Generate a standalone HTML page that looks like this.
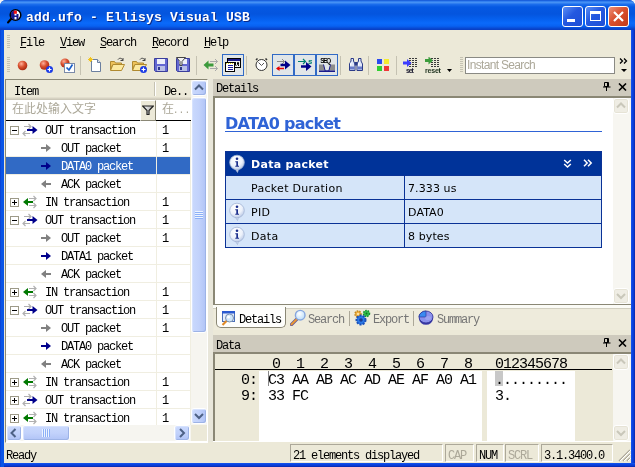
<!DOCTYPE html>
<html><head><meta charset="utf-8"><title>add.ufo - Ellisys Visual USB</title>
<style>
*{box-sizing:border-box;margin:0;padding:0}
html,body{width:635px;height:467px;overflow:hidden;background:#f4f4f4}
body{position:relative;font:12px "Liberation Mono","Noto Sans CJK SC",monospace;letter-spacing:-1.2px;color:#000}
.a{position:absolute}
u{text-decoration:underline;text-underline-offset:1px;text-decoration-thickness:1px}
/* window frame */
#frame{left:0;top:0;width:635px;height:467px;background:#0855dd;border-radius:6px 6px 0 0}
#title{left:0;top:0;width:635px;height:30px;border-radius:6px 6px 0 0;
 background:linear-gradient(180deg,#0a48cc 0,#2a78ee 1px,#4590f4 2.5px,#1a6cec 4.5px,#0558e2 7px,#0455de 14px,#0560ee 19px,#0a6afa 23px,#0862f2 26px,#0848d0 28.5px,#0a3cc0 30px)}
#title .txt{left:26px;top:10px;font:bold 13px "Liberation Mono",monospace;letter-spacing:.2px;color:#fff;text-shadow:1px 1px 0 #0a2a8a;white-space:pre}
#client{left:4px;top:30px;width:627px;height:433px;background:#ece9d8}
.cb{top:6px;width:21px;height:21px;border:1px solid #fff;border-radius:3px;background:linear-gradient(135deg,#5b8ff5 0,#2458e0 45%,#1f4fd6 100%)}
.cb.x{background:linear-gradient(135deg,#ee9078 0,#d9502f 45%,#c23a18 100%)}
/* menu */
.grip{width:3px;background:repeating-linear-gradient(180deg,#c5c2b2 0,#c5c2b2 1px,transparent 1px,transparent 2px)}
.mi{top:36px;white-space:pre}
/* toolbar */
.tsep{top:56px;width:1px;height:19px;background:#c5c2b2}
.tchk{top:54px;width:22px;height:22px;border:1px solid #316ac5;background:#e1e6e8}
.ti{top:57px;width:16px;height:16px}
/* panels */
.phead{height:17px;background:#cecabd}
.row{position:absolute;left:0;width:185px;height:18px;border-bottom:1px solid #f0eee1;border-right:1px solid #f0eee1}
.row.sel{background:#316ac5;color:#fff}
.row .t{position:absolute;top:3px;white-space:pre}
.row .ic{position:absolute;top:1px}
.row .c2{position:absolute;left:150px;top:0;width:1px;height:18px;background:#f0eee1}

.exp{position:absolute;left:4px;top:5px;width:9px;height:9px;border:1px solid #9d9a88;background:#fff}
.exp:before{content:"";position:absolute;left:1px;top:3px;width:5px;height:1px;background:#000}
.exp i{position:absolute;left:3px;top:1px;width:1px;height:5px;background:#000}
/* scrollbars */
.sb{background:#f6f5f0}
.sbtn{width:16px;height:16px;border:1px solid #fff;border-radius:3px;background:linear-gradient(90deg,#cad9fd 0,#c2d2fb 50%,#b0c3f6 100%);box-shadow:inset -1px -1px 0 0 #9db3e6,inset 1px 1px 0 0 #d6e2fe}
.sbtn svg{display:block}
.sthumb{border:1px solid #fff;border-radius:3px;background:linear-gradient(90deg,#cad9fd 0,#c2d2fb 50%,#b0c3f6 100%);box-shadow:inset -1px -1px 0 0 #9db3e6,inset 1px 1px 0 0 #d6e2fe}
.sbtn.h,.sthumb.h{background:linear-gradient(180deg,#cad9fd 0,#c2d2fb 50%,#b0c3f6 100%)}
.sbtn.dis,.sthumb.dis{width:16px;height:16px;background:#efede4;box-shadow:inset 0 0 0 1px #e6e3d6}
/* details */
.v{font-family:"DejaVu Sans","Liberation Sans",sans-serif;letter-spacing:0}
.trow{left:225px;width:377px;height:25px;background:#d5e5f9;border:1px solid #0a3296}
.trow .k{position:absolute;left:25px;top:6px;font:11px "DejaVu Sans",sans-serif;letter-spacing:.3px}
.trow .val{position:absolute;left:182px;top:6px;font:11px "DejaVu Sans",sans-serif;letter-spacing:.1px}
.trow .cs{position:absolute;left:178px;top:0;width:1px;height:23px;background:#0a3296}
.hex{font:15px "Liberation Mono",monospace;letter-spacing:-1px;white-space:pre}
.tab{top:313px;white-space:pre;color:#757575}
.sp{border:1px solid #aca899;border-right-color:#fff;border-bottom-color:#fff;height:18px;top:444px;padding:4px 0 0 2px;white-space:pre}
</style></head><body><div id="root" class="a" style="left:0;top:0;width:635px;height:467px;will-change:transform">
<div id="frame" class="a"></div>
<div class="a" style="left:631px;top:28px;width:4px;height:439px;background:linear-gradient(90deg,#1656ee 0,#0a44e2 35%,#0a3cd8 60%,#0a28a8 100%)"></div>
<div class="a" style="left:0;top:463px;width:635px;height:4px;background:linear-gradient(180deg,#1656ee 0,#0a44e2 35%,#0a3cd8 60%,#0a28a8 100%)"></div>
<div class="a" style="left:0;top:28px;width:4px;height:439px;background:linear-gradient(90deg,#0a3cd0 0,#0a55e6 30%,#0a55e6 100%)"></div>
<div id="title" class="a">
 <svg class="a" style="left:6px;top:7px" width="18" height="18" viewBox="0 0 18 18"><defs><clipPath id="cc"><circle cx="9.500" cy="8" r="4.800"/></clipPath></defs><path d="M2 15.500l3.500-4" stroke="#000" stroke-width="2" stroke-linecap="round"/><circle cx="9.500" cy="8" r="5.300" fill="#fff" stroke="#000" stroke-width="1.500"/><g clip-path="url(#cc)"><rect x="5" y="3" width="3.500" height="10" fill="#141a8c"/><rect x="10.500" y="7" width="2" height="6" fill="#141a8c"/><rect x="8" y="8.500" width="3" height="1.500" fill="#141a8c"/><rect x="7.700" y="3.500" width="3.200" height="3.300" fill="#f01010"/></g></svg>
 <div class="a txt">add.ufo - Ellisys Visual USB</div>
 <div class="a cb" style="left:562px"><div class="a" style="left:4px;top:12px;width:8px;height:3px;background:#fff"></div></div>
 <div class="a cb" style="left:585px"><div class="a" style="left:4px;top:4px;width:11px;height:10px;border:1px solid #fff;border-top-width:3px"></div></div>
 <div class="a cb x" style="left:608px"><svg class="a" style="left:0;top:0" width="19" height="19" viewBox="0 0 19 19"><path d="M5 5l9 9M14 5l-9 9" stroke="#fff" stroke-width="2.2"/></svg></div>
</div>
<div id="client" class="a"></div>

<!-- menu bar -->
<div class="a grip" style="left:7px;top:35px;height:14px"></div>
<div class="a mi" style="left:20px"><u>F</u>ile</div>
<div class="a mi" style="left:60px"><u>V</u>iew</div>
<div class="a mi" style="left:100px"><u>S</u>earch</div>
<div class="a mi" style="left:152px"><u>R</u>ecord</div>
<div class="a mi" style="left:204px"><u>H</u>elp</div>

<!-- toolbar -->
<div class="a grip" style="left:7px;top:57px;height:15px"></div>
<svg class="a ti" style="left:16px" viewBox="0 0 16 16"><defs><radialGradient id="rg" cx="38%" cy="32%" r="70%"><stop offset="0" stop-color="#ffb09a"/><stop offset=".5" stop-color="#d8502f"/><stop offset="1" stop-color="#a82810"/></radialGradient></defs><circle cx="6.500" cy="8.500" r="4.800" fill="url(#rg)"/></svg>
<svg class="a ti" style="left:38px" viewBox="0 0 16 16"><circle cx="6.500" cy="8" r="4.800" fill="url(#rg)"/><circle cx="11.5" cy="12.5" r="3.500" fill="#1a3ae6"/><path d="M9.5 12.5h4M11.5 10.5v4" stroke="#fff" stroke-width="1.200"/></svg>
<svg class="a ti" style="left:60px" viewBox="0 0 16 16"><circle cx="5" cy="6" r="4.600" fill="url(#rg)"/><rect x="4.500" y="6.500" width="10" height="9" fill="#fff" stroke="#7b8aa8"/><path d="M6.500 10.500l2.500 2.500l3.500-5.500" stroke="#1a5ec8" stroke-width="1.700" fill="none"/></svg>
<div class="a tsep" style="left:80px"></div>
<svg class="a ti" style="left:88px" viewBox="0 0 16 16"><path d="M3.500 2.500h6l3 3v9h-9z" fill="#fff" stroke="#6b7f9f"/><path d="M9.500 2.500v3h3" fill="#dfe6f0" stroke="#6b7f9f"/><path d="M2.500 0v5M0 2.500h5M.8 .8l3.400 3.400M4.200 .8L.8 4.200" stroke="#f2c41c" stroke-width="1"/></svg>
<svg class="a ti" style="left:109px" viewBox="0 0 16 16"><path d="M1.5 4.500h4l1 1.500h6v2h-9l-2 5z" fill="#eec25a" stroke="#b08a30" stroke-width="1"/><path d="M1.500 13.500l2.500-6h11.500l-3 6z" fill="#fce9a0" stroke="#b08a30" stroke-width="1"/><path d="M9 2.500c1.500-2 4-1.500 5 1M14 1v2.500h-2.500" stroke="#444" fill="none" stroke-width="1"/></svg>
<svg class="a ti" style="left:131px" viewBox="0 0 16 16"><path d="M1.5 4.500h4l1 1.500h6v2h-9l-2 5z" fill="#eec25a" stroke="#b08a30" stroke-width="1"/><path d="M1.500 13.500l2.500-6h11.500l-3 6z" fill="#fce9a0" stroke="#b08a30" stroke-width="1"/><path d="M9 2.500c1.500-2 4-1.500 5 1M14 1v2.500h-2.500" stroke="#444" fill="none" stroke-width="1"/><circle cx="12.5" cy="12.5" r="3.500" fill="#1a3ae6"/><path d="M10.5 12.5h4M12.5 10.5v4" stroke="#fff" stroke-width="1.200"/></svg>
<svg class="a ti" style="left:153px" viewBox="0 0 16 16"><path d="M1.500 1.500h13v13h-12l-1-1z" fill="#6468d2" stroke="#3a3e9c"/><rect x="4" y="2" width="8" height="5" fill="#eef0fa"/><rect x="4" y="9" width="8" height="5" fill="#b9bfe6"/><rect x="5" y="10" width="2" height="3" fill="#2e388f"/></svg>
<svg class="a ti" style="left:175px" viewBox="0 0 16 16"><path d="M1.500 1.500h13v13h-12l-1-1z" fill="#6468d2" stroke="#3a3e9c"/><rect x="4" y="2" width="8" height="5" fill="#eef0fa"/><rect x="4" y="9" width="8" height="5" fill="#b9bfe6"/><rect x="5" y="10" width="2" height="3" fill="#2e388f"/><path d="M1.500 .5h9L7 4.500v4h-2v-4z" fill="#f2f2f2" stroke="#444" stroke-width="1"/></svg>
<div class="a tsep" style="left:196px"></div>
<svg class="a ti" style="left:203px" viewBox="0 0 16 16"><path d="M5.500 3.500L.5 8L5.500 12.500V9.500h5v-3h-5z" fill="#3d9b3d"/><path d="M7 4.500h7.500M12 2l2.500 2.500L12 7M7 11.500h7.500M12 9l2.500 2.500L12 14" stroke="#a8a8a8" stroke-width="1" fill="none"/></svg>
<div class="a tchk" style="left:222px"></div>
<svg class="a ti" style="left:225px" viewBox="0 0 16 16"><rect x="2.500" y="1.500" width="13" height="9" fill="#eceef4" stroke="#000"/><rect x="3" y="2" width="12" height="2" fill="#1a1a8c"/><path d="M10.500 5v3M12.500 5.500h1v2h-1zM10.500 8.500h1v0M13.500 8v1" stroke="#000" fill="none"/><rect x=".5" y="5.500" width="9" height="9" fill="#fff" stroke="#000"/><path d="M1 6.500h8" stroke="#e8d820" stroke-dasharray="1 1"/><path d="M3 8.500h5M3 10.500h5M3 12.500h5" stroke="#1a1a9c"/></svg>
<div class="a tsep" style="left:246px"></div>
<svg class="a ti" style="left:253px" viewBox="0 0 16 16"><circle cx="8.500" cy="8" r="5.500" fill="#fff" stroke="#333"/><path d="M5.500 5.500l3 3l2.500-2.500" stroke="#555" fill="none"/><path d="M3 3l1.500-1.500M14 3l-1.500-1.500" stroke="#333" stroke-width="1.500"/></svg>
<div class="a tchk" style="left:272px"></div>
<svg class="a ti" style="left:275px" viewBox="0 0 16 16"><path d="M2 4.500h7.500M7 2l2.500 2.500L7 7" stroke="#888" fill="none"/><path d="M5.500 8h6" stroke="#00008b" stroke-width="2.500"/><path d="M10 3.500L15.500 8L10 12.500z" fill="#00008b"/><path d="M2 11.500h7" stroke="#e60000" stroke-width="1.500" fill="none"/><path d="M4.500 9L1 11.500L4.500 14z" fill="#e60000"/></svg>
<div class="a tchk" style="left:294px"></div>
<svg class="a ti" style="left:297px" viewBox="0 0 16 16"><path d="M1 4.500h7.500M6 2l2.500 2.500L6 7" stroke="#008070" fill="none" stroke-width="1.200"/><path d="M4 9.500h6" stroke="#00008b" stroke-width="2.500"/><path d="M9 5L14.500 9.500L9 14z" fill="#00008b"/><text x="11" y="6.500" font-size="8" font-family="Liberation Sans, sans-serif" fill="#008070" font-weight="bold" font-style="italic">s</text></svg>
<div class="a tchk" style="left:316px"></div>
<svg class="a ti" style="left:319px" viewBox="0 0 16 16"><text x="1.300" y="5.700" font-size="6.300" font-weight="bold" font-family="Liberation Sans, sans-serif" fill="#000">SEQ</text><path d="M0 7.500h4.500l1.500 6H0zM16 7.500h-4.500l-1.500 6h6z" fill="#8c8c8c"/><path d="M0 14.250h16" stroke="#1a1a8c" stroke-width="1.500" fill="none"/><path d="M4.500 7.500l1.700 6.500h3.600l1.700-6.500" stroke="#1a1a8c" stroke-width="1" fill="none"/></svg>
<div class="a tsep" style="left:340px"></div>
<svg class="a ti" style="left:348px" viewBox="0 0 16 16"><path d="M3 1.500h2.500v2.500l1.500 3v6.500h-5.500v-6.500l1.500-3zM10.500 1.500h2.500v2.500l1.500 3v6.500h-5.500v-6.500l1.500-3z" fill="#dfe6f8" stroke="#2c3c88" stroke-width="1"/><rect x="6.500" y="5" width="3" height="3.500" fill="#2c3c88"/><path d="M2 11h4.500M9.500 11h4.500" stroke="#6a7cca" stroke-width="3"/><path d="M3 5.500l-.5 3M11 5.500l-.5 3" stroke="#fff" stroke-width="1.200"/></svg>
<div class="a tsep" style="left:368px"></div>
<svg class="a ti" style="left:375px" viewBox="0 0 16 16"><rect x="2" y="2" width="5" height="5" fill="#2a4af0"/><rect x="9" y="2" width="5" height="5" fill="#f4ec30"/><rect x="2" y="9" width="5" height="5" fill="#30d030"/><rect x="9" y="9" width="5" height="5" fill="#f03838"/></svg>
<div class="a tsep" style="left:396px"></div>
<svg class="a ti" style="left:403px" viewBox="0 0 16 16"><path d="M6 1.500h9M6 3.500h9M6 5.500h9M6 7.500h9M6 9.500h9" stroke="#3a3a3a" stroke-width="1" stroke-dasharray="2 1"/><path d="M0 6h5" stroke="#3c3cff" stroke-width="3"/><path d="M4 2L8.500 6L4 10z" fill="#3c3cff"/><text x="3" y="15.800" font-size="7" font-family="Liberation Sans, sans-serif" fill="#1c1c30" font-weight="bold">set</text></svg>
<svg class="a ti" style="left:425px" viewBox="0 0 16 16"><path d="M6 1.500h9M6 3.500h9M6 5.500h9M6 7.500h9M6 9.500h9" stroke="#3a3a3a" stroke-width="1" stroke-dasharray="2 1"/><path d="M0 3.500h5" stroke="#3c9c3c" stroke-width="3"/><path d="M3.500 -.5L8 3.500L3.500 7.500z" fill="#3c9c3c"/><text x="0" y="15.800" font-size="7" font-family="Liberation Sans, sans-serif" fill="#1c301c" font-weight="bold" letter-spacing="-.2">reset</text></svg>
<svg class="a" style="left:447px;top:69px" width="5" height="3" viewBox="0 0 5 3"><path d="M0 0h5L2.500 3z" fill="#000"/></svg>
<div class="a grip" style="left:460px;top:57px;height:15px"></div>
<div class="a" style="left:465px;top:57px;width:150px;height:17px;background:#fff;border:1px solid #8a8a84"></div>
<div class="a" style="left:467px;top:58px;font:12px 'Liberation Sans',sans-serif;letter-spacing:-.67px;color:#aca899;white-space:pre">Instant Search</div>
<svg class="a" style="left:619px;top:58px" width="10" height="14" viewBox="0 0 10 14"><path d="M1 .5l2.500 2.500L1 5.500M5 .5l2.500 2.500L5 5.500" stroke="#000" stroke-width="1.300" fill="none"/><path d="M2 11h6L5 14z" fill="#000"/></svg>

<!-- left panel -->
<div class="a" style="left:5px;top:79px;width:203px;height:364px;background:#fff;border:1px solid #8a8775;border-right-color:#fff;border-bottom-color:#fff"></div>
<div class="a" style="left:6px;top:80px;width:185px;height:20px;background:linear-gradient(180deg,#ece9d8 0,#ece9d8 17px,#e2dece 17px,#e2dece 18px,#d6d2c2 18px,#d6d2c2 19px,#cbc7b8 19px)"></div>
<div class="a" style="left:154px;top:82px;width:1px;height:14px;background:#c5c2b2"></div>
<div class="a" style="left:155px;top:82px;width:1px;height:14px;background:#fff"></div>
<div class="a" style="left:14px;top:85px;white-space:pre">Item</div>
<div class="a" style="left:164px;top:85px;white-space:pre">De..</div>
<div class="a" style="left:6px;top:100px;width:185px;height:20px;background:#fff"></div>
<div class="a" style="left:12px;top:100px;color:#aca899;font:12px 'Liberation Sans','Noto Sans CJK SC',sans-serif;letter-spacing:0;white-space:pre;line-height:18px">在此处输入文字</div>


<div class="a" style="left:155px;top:99px;width:1px;height:21px;background:#d0cdbf"></div>
<div class="a" style="left:162px;top:100px;color:#aca899;font:12px 'Liberation Sans','Noto Sans CJK SC',sans-serif;letter-spacing:0;white-space:pre;line-height:18px">在<span style="letter-spacing:2.500px">...</span></div>
<div class="a" style="left:6px;top:120px;width:185px;height:1px;background:#000"></div>
<div class="a" style="left:140px;top:100px;width:16px;height:21px;background:#ece9d8;border:1px solid #fff;border-right-color:#8a8775;border-bottom-color:#8a8775"></div>
<svg class="a" style="left:142px;top:105px" width="12" height="10" viewBox="0 0 12 10"><defs><linearGradient id="fg" x1="0" y1="0" x2="1" y2="0"><stop offset="0" stop-color="#fff"/><stop offset="1" stop-color="#a8a8a8"/></linearGradient></defs><path d="M.7 1h10.600L7 5.500v4h-2v-4z" fill="url(#fg)" stroke="#222" stroke-width="1.200"/></svg>
<div class="a" style="left:6px;top:0;width:185px;height:425px;overflow:hidden;clip-path:inset(121px 0 0 0)">
<div class="row" style="top:121px"><span class="exp"></span><svg class="ic" style="left:16px" width="16" height="16" viewBox="0 0 16 16"><path d="M2 4.5h7M6.5 2l2.5 2.5l-2.5 2.5" stroke="#b0b0b0" stroke-width="1.2" fill="none"/><path d="M1 11.5h7M3.5 9l-2.5 2.5l2.5 2.5" stroke="#b0b0b0" stroke-width="1.2" fill="none"/><path d="M5 8h6.5" stroke="#00008b" stroke-width="2" fill="none"/><path d="M10.5 4l5 4l-5 4z" fill="#00008b"/></svg><span class="t" style="left:39px">OUT transaction</span><span class="c2"></span><span class="t" style="left:156px">1</span></div>
<div class="row" style="top:139px"><svg class="ic" style="left:34px" width="16" height="16" viewBox="0 0 16 16"><path d="M1 8h6" stroke="#808080" stroke-width="2" fill="none"/><path d="M6 4l5 4l-5 4z" fill="#808080"/></svg><span class="t" style="left:55px">OUT packet</span><span class="c2"></span><span class="t" style="left:156px">1</span></div>
<div class="row sel" style="top:157px"><svg class="ic" style="left:34px" width="16" height="16" viewBox="0 0 16 16"><path d="M1 8h6" stroke="#00008b" stroke-width="2" fill="none"/><path d="M6 4l5 4l-5 4z" fill="#00008b"/></svg><span class="t" style="left:55px">DATA0 packet</span><span class="c2"></span><span class="t" style="left:156px"></span></div>
<div class="row" style="top:175px"><svg class="ic" style="left:34px" width="16" height="16" viewBox="0 0 16 16"><path d="M5 8h6" stroke="#808080" stroke-width="2" fill="none"/><path d="M6 4l-5 4l5 4z" fill="#808080"/></svg><span class="t" style="left:55px">ACK packet</span><span class="c2"></span><span class="t" style="left:156px"></span></div>
<div class="row" style="top:193px"><span class="exp"><i></i></span><svg class="ic" style="left:16px" width="16" height="16" viewBox="0 0 16 16"><path d="M7 4.5h7M11.5 2l2.5 2.5l-2.5 2.5" stroke="#b0b0b0" stroke-width="1.2" fill="none"/><path d="M7 11.5h7M11.5 9l2.5 2.5l-2.5 2.5" stroke="#b0b0b0" stroke-width="1.2" fill="none"/><path d="M5 8h6" stroke="#007800" stroke-width="2" fill="none"/><path d="M6 4l-5 4l5 4z" fill="#007800"/></svg><span class="t" style="left:39px">IN transaction</span><span class="c2"></span><span class="t" style="left:156px">1</span></div>
<div class="row" style="top:211px"><span class="exp"></span><svg class="ic" style="left:16px" width="16" height="16" viewBox="0 0 16 16"><path d="M2 4.5h7M6.5 2l2.5 2.5l-2.5 2.5" stroke="#b0b0b0" stroke-width="1.2" fill="none"/><path d="M1 11.5h7M3.5 9l-2.5 2.5l2.5 2.5" stroke="#b0b0b0" stroke-width="1.2" fill="none"/><path d="M5 8h6.5" stroke="#00008b" stroke-width="2" fill="none"/><path d="M10.5 4l5 4l-5 4z" fill="#00008b"/></svg><span class="t" style="left:39px">OUT transaction</span><span class="c2"></span><span class="t" style="left:156px">1</span></div>
<div class="row" style="top:229px"><svg class="ic" style="left:34px" width="16" height="16" viewBox="0 0 16 16"><path d="M1 8h6" stroke="#808080" stroke-width="2" fill="none"/><path d="M6 4l5 4l-5 4z" fill="#808080"/></svg><span class="t" style="left:55px">OUT packet</span><span class="c2"></span><span class="t" style="left:156px">1</span></div>
<div class="row" style="top:247px"><svg class="ic" style="left:34px" width="16" height="16" viewBox="0 0 16 16"><path d="M1 8h6" stroke="#00008b" stroke-width="2" fill="none"/><path d="M6 4l5 4l-5 4z" fill="#00008b"/></svg><span class="t" style="left:55px">DATA1 packet</span><span class="c2"></span><span class="t" style="left:156px"></span></div>
<div class="row" style="top:265px"><svg class="ic" style="left:34px" width="16" height="16" viewBox="0 0 16 16"><path d="M5 8h6" stroke="#808080" stroke-width="2" fill="none"/><path d="M6 4l-5 4l5 4z" fill="#808080"/></svg><span class="t" style="left:55px">ACK packet</span><span class="c2"></span><span class="t" style="left:156px"></span></div>
<div class="row" style="top:283px"><span class="exp"><i></i></span><svg class="ic" style="left:16px" width="16" height="16" viewBox="0 0 16 16"><path d="M7 4.5h7M11.5 2l2.5 2.5l-2.5 2.5" stroke="#b0b0b0" stroke-width="1.2" fill="none"/><path d="M7 11.5h7M11.5 9l2.5 2.5l-2.5 2.5" stroke="#b0b0b0" stroke-width="1.2" fill="none"/><path d="M5 8h6" stroke="#007800" stroke-width="2" fill="none"/><path d="M6 4l-5 4l5 4z" fill="#007800"/></svg><span class="t" style="left:39px">IN transaction</span><span class="c2"></span><span class="t" style="left:156px">1</span></div>
<div class="row" style="top:301px"><span class="exp"></span><svg class="ic" style="left:16px" width="16" height="16" viewBox="0 0 16 16"><path d="M2 4.5h7M6.5 2l2.5 2.5l-2.5 2.5" stroke="#b0b0b0" stroke-width="1.2" fill="none"/><path d="M1 11.5h7M3.5 9l-2.5 2.5l2.5 2.5" stroke="#b0b0b0" stroke-width="1.2" fill="none"/><path d="M5 8h6.5" stroke="#00008b" stroke-width="2" fill="none"/><path d="M10.5 4l5 4l-5 4z" fill="#00008b"/></svg><span class="t" style="left:39px">OUT transaction</span><span class="c2"></span><span class="t" style="left:156px">1</span></div>
<div class="row" style="top:319px"><svg class="ic" style="left:34px" width="16" height="16" viewBox="0 0 16 16"><path d="M1 8h6" stroke="#808080" stroke-width="2" fill="none"/><path d="M6 4l5 4l-5 4z" fill="#808080"/></svg><span class="t" style="left:55px">OUT packet</span><span class="c2"></span><span class="t" style="left:156px">1</span></div>
<div class="row" style="top:337px"><svg class="ic" style="left:34px" width="16" height="16" viewBox="0 0 16 16"><path d="M1 8h6" stroke="#00008b" stroke-width="2" fill="none"/><path d="M6 4l5 4l-5 4z" fill="#00008b"/></svg><span class="t" style="left:55px">DATA0 packet</span><span class="c2"></span><span class="t" style="left:156px"></span></div>
<div class="row" style="top:355px"><svg class="ic" style="left:34px" width="16" height="16" viewBox="0 0 16 16"><path d="M5 8h6" stroke="#808080" stroke-width="2" fill="none"/><path d="M6 4l-5 4l5 4z" fill="#808080"/></svg><span class="t" style="left:55px">ACK packet</span><span class="c2"></span><span class="t" style="left:156px"></span></div>
<div class="row" style="top:373px"><span class="exp"><i></i></span><svg class="ic" style="left:16px" width="16" height="16" viewBox="0 0 16 16"><path d="M7 4.5h7M11.5 2l2.5 2.5l-2.5 2.5" stroke="#b0b0b0" stroke-width="1.2" fill="none"/><path d="M7 11.5h7M11.5 9l2.5 2.5l-2.5 2.5" stroke="#b0b0b0" stroke-width="1.2" fill="none"/><path d="M5 8h6" stroke="#007800" stroke-width="2" fill="none"/><path d="M6 4l-5 4l5 4z" fill="#007800"/></svg><span class="t" style="left:39px">IN transaction</span><span class="c2"></span><span class="t" style="left:156px">1</span></div>
<div class="row" style="top:391px"><span class="exp"><i></i></span><svg class="ic" style="left:16px" width="16" height="16" viewBox="0 0 16 16"><path d="M2 4.5h7M6.5 2l2.5 2.5l-2.5 2.5" stroke="#b0b0b0" stroke-width="1.2" fill="none"/><path d="M1 11.5h7M3.5 9l-2.5 2.5l2.5 2.5" stroke="#b0b0b0" stroke-width="1.2" fill="none"/><path d="M5 8h6.5" stroke="#00008b" stroke-width="2" fill="none"/><path d="M10.5 4l5 4l-5 4z" fill="#00008b"/></svg><span class="t" style="left:39px">OUT transaction</span><span class="c2"></span><span class="t" style="left:156px">1</span></div>
<div class="row" style="top:409px"><span class="exp"><i></i></span><svg class="ic" style="left:16px" width="16" height="16" viewBox="0 0 16 16"><path d="M7 4.5h7M11.5 2l2.5 2.5l-2.5 2.5" stroke="#b0b0b0" stroke-width="1.2" fill="none"/><path d="M7 11.5h7M11.5 9l2.5 2.5l-2.5 2.5" stroke="#b0b0b0" stroke-width="1.2" fill="none"/><path d="M5 8h6" stroke="#007800" stroke-width="2" fill="none"/><path d="M6 4l-5 4l5 4z" fill="#007800"/></svg><span class="t" style="left:39px">IN transaction</span><span class="c2"></span><span class="t" style="left:156px">1</span></div>
</div>
<!-- left vscroll -->
<div class="a sb" style="left:191px;top:80px;width:16px;height:345px"></div>
<div class="a sbtn" style="left:191px;top:80px"><svg width="14" height="14" viewBox="0 0 14 14"><path d="M3 8.500l4-4l4 4" stroke="#4d6185" stroke-width="2" fill="none"/></svg></div>
<div class="a sthumb" style="left:191px;top:97px;width:16px;height:236px"></div>
<div class="a" style="left:195px;top:211px;width:8px;height:8px;background:repeating-linear-gradient(180deg,#eef4fe 0,#eef4fe 1px,#8cb0f8 1px,#8cb0f8 2px)"></div>
<div class="a sbtn" style="left:191px;top:408px"><svg width="14" height="14" viewBox="0 0 14 14"><path d="M3 5l4 4l4-4" stroke="#4d6185" stroke-width="2" fill="none"/></svg></div>
<!-- left hscroll -->
<div class="a sb" style="left:6px;top:425px;width:185px;height:16px"></div>
<div class="a sbtn h" style="left:6px;top:425px"><svg width="14" height="14" viewBox="0 0 14 14"><path d="M8.500 3l-4 4l4 4" stroke="#4d6185" stroke-width="2" fill="none"/></svg></div>
<div class="a sthumb h" style="left:22px;top:425px;width:48px;height:16px"></div>
<div class="a" style="left:42px;top:429px;width:8px;height:8px;background:repeating-linear-gradient(90deg,#eef4fe 0,#eef4fe 1px,#8cb0f8 1px,#8cb0f8 2px)"></div>
<div class="a sbtn h" style="left:174px;top:425px"><svg width="14" height="14" viewBox="0 0 14 14"><path d="M5 3l4 4l-4 4" stroke="#4d6185" stroke-width="2" fill="none"/></svg></div>
<div class="a" style="left:191px;top:425px;width:16px;height:16px;background:#ece9d8"></div>
<div class="a" style="left:208px;top:79px;width:5px;height:363px;background:#e8e6da"></div>
<!-- right top panel -->
<div class="a phead" style="left:213px;top:79px;width:418px;height:17px"></div>
<div class="a" style="left:216px;top:82px;white-space:pre">Details</div>
<svg class="a" style="left:603px;top:82px" width="8" height="9" viewBox="0 0 8 9"><path d="M1.500 .5h4v4h-4zM4.500 .5v4M0 5h7.500M3.500 5v4" stroke="#000" fill="none"/></svg>
<svg class="a" style="left:618px;top:83px" width="9" height="8" viewBox="0 0 9 8"><path d="M1 .5l7 7M8 .5l-7 7" stroke="#000" stroke-width="1.600"/></svg>
<div class="a" style="left:213px;top:96px;width:418px;height:209px;background:#fff;border:2px solid #8a8775;border-right:0;border-bottom-width:1px"></div>
<div class="a sb" style="left:613px;top:98px;width:18px;height:206px;background:#f7f6f1"></div>
<div class="a sbtn dis" style="left:613px;top:98px"><svg width="14" height="14" viewBox="0 0 14 14"><path d="M3 8.500l4-4l4 4" stroke="#c9c7ba" stroke-width="2" fill="none"/></svg></div>
<div class="a sbtn dis" style="left:613px;top:288px"><svg width="14" height="14" viewBox="0 0 14 14"><path d="M3 5l4 4l4-4" stroke="#c9c7ba" stroke-width="2" fill="none"/></svg></div>
<div class="a v" style="left:225px;top:114px;font-weight:bold;font-size:16px;letter-spacing:-.7px;color:#2f63d6;white-space:pre">DATA0 packet</div>
<div class="a" style="left:225px;top:131px;width:377px;height:1px;background:#2f63d6"></div>
<div class="a trow" style="top:151px;background:#003399"><svg class="a" style="left:2px;top:2px" width="18" height="19" viewBox="0 0 18 19"><defs><radialGradient id="ig1" cx="40%" cy="30%" r="75%"><stop offset="0" stop-color="#fff"/><stop offset=".6" stop-color="#edf2fb"/><stop offset="1" stop-color="#b4c4e2"/></radialGradient></defs><path d="M6.500 14l3 4.500l1.500-4.500z" fill="#cfdaee" stroke="#a3b5d6" stroke-width=".7"/><circle cx="9" cy="8.500" r="7.300" fill="url(#ig1)" stroke="#a3b5d6" stroke-width=".8"/><circle cx="9" cy="4.800" r="1.300" fill="#1c2f8c"/><path d="M7.300 7.200h2.700v4.500h1v1H7.300v-1h1v-3.500h-1z" fill="#1c2f8c"/></svg><span class="k" style="color:#fff;font-weight:bold">Data packet</span>
 <svg class="a" style="left:337px;top:7px" width="10" height="10" viewBox="0 0 10 10"><path d="M1.200 1l3.300 3l3.300-3M1.200 5l3.300 3l3.300-3" stroke="#fff" stroke-width="1.500" fill="none"/></svg>
 <svg class="a" style="left:357px;top:7px" width="10" height="8" viewBox="0 0 10 8"><path d="M1 .8l3.200 3.200l-3.200 3.200M5 .8l3.200 3.200l-3.200 3.200" stroke="#fff" stroke-width="1.500" fill="none"/></svg>
</div>
<div class="a trow" style="top:175px"><span class="k">Packet Duration</span><span class="cs"></span><span class="val">7.333 us</span></div>
<div class="a trow" style="top:199px"><svg class="a" style="left:2px;top:2px" width="18" height="19" viewBox="0 0 18 19"><defs><radialGradient id="ig2" cx="40%" cy="30%" r="75%"><stop offset="0" stop-color="#fff"/><stop offset=".6" stop-color="#edf2fb"/><stop offset="1" stop-color="#b4c4e2"/></radialGradient></defs><path d="M6.500 14l3 4.500l1.500-4.500z" fill="#cfdaee" stroke="#a3b5d6" stroke-width=".7"/><circle cx="9" cy="8.500" r="7.300" fill="url(#ig2)" stroke="#a3b5d6" stroke-width=".8"/><circle cx="9" cy="4.800" r="1.300" fill="#1c2f8c"/><path d="M7.300 7.200h2.700v4.500h1v1H7.300v-1h1v-3.500h-1z" fill="#1c2f8c"/></svg><span class="k">PID</span><span class="cs"></span><span class="val">DATA0</span></div>
<div class="a trow" style="top:223px"><svg class="a" style="left:2px;top:2px" width="18" height="19" viewBox="0 0 18 19"><defs><radialGradient id="ig3" cx="40%" cy="30%" r="75%"><stop offset="0" stop-color="#fff"/><stop offset=".6" stop-color="#edf2fb"/><stop offset="1" stop-color="#b4c4e2"/></radialGradient></defs><path d="M6.500 14l3 4.500l1.500-4.500z" fill="#cfdaee" stroke="#a3b5d6" stroke-width=".7"/><circle cx="9" cy="8.500" r="7.300" fill="url(#ig3)" stroke="#a3b5d6" stroke-width=".8"/><circle cx="9" cy="4.800" r="1.300" fill="#1c2f8c"/><path d="M7.300 7.200h2.700v4.500h1v1H7.300v-1h1v-3.500h-1z" fill="#1c2f8c"/></svg><span class="k">Data</span><span class="cs"></span><span class="val">8 bytes</span></div>

<!-- tabs -->
<div class="a" style="left:214px;top:305px;width:417px;height:25px;background:#eeebdc"></div>
<div class="a" style="left:213px;top:308px;width:418px;height:1px;background:#d2cfc0"></div>
<div class="a" style="left:213px;top:305px;width:418px;height:3px;background:#fbfbf6"></div>
<div class="a" style="left:216px;top:307px;width:70px;height:21px;background:#fefefc;border:1px solid #8a8775;border-top:0;border-radius:0 0 5px 5px"></div>
<svg class="a" style="left:220px;top:309px" width="17" height="17" viewBox="0 0 17 17"><rect x="2.500" y="2.500" width="12" height="10" fill="#e6eefb" stroke="#4a6fb8"/><rect x="2" y="2" width="13" height="2.500" fill="#2a5ad0"/><circle cx="9.500" cy="9" r="4" fill="#cfe6fa" stroke="#7a90b0"/><circle cx="8.500" cy="8" r="1.500" fill="#fff"/><path d="M6.500 12l-4 4" stroke="#e08a28" stroke-width="2.200"/></svg>
<div class="a tab" style="left:239px;color:#000">Details</div>
<svg class="a" style="left:290px;top:309px" width="17" height="17" viewBox="0 0 17 17"><defs><radialGradient id="lg" cx="40%" cy="35%" r="70%"><stop offset="0" stop-color="#fff"/><stop offset="1" stop-color="#b8dcfa"/></radialGradient></defs><path d="M6.500 10.500l-5 5" stroke="#6a5a90" stroke-width="3.200" stroke-linecap="round"/><path d="M6.500 10.300l-5 5" stroke="#f09a30" stroke-width="1.800" stroke-linecap="round"/><circle cx="10.200" cy="6.200" r="4.800" fill="url(#lg)" stroke="#86a6de" stroke-width="1.400"/></svg>
<div class="a tab" style="left:308px">Search</div>
<div class="a" style="left:349px;top:311px;width:1px;height:15px;background:#aca899"></div>
<svg class="a" style="left:353px;top:309px" width="18" height="17" viewBox="0 0 18 17"><circle cx="5" cy="5" r="3" fill="#f0b040" stroke="#c08820" stroke-width="1.500" stroke-dasharray="1.500 1"/><circle cx="13.500" cy="4.500" r="3" fill="#30c050" stroke="#189030" stroke-width="1.500" stroke-dasharray="1.500 1"/><circle cx="8" cy="11" r="4.500" fill="#2a78e8" stroke="#1a50b8" stroke-width="2" stroke-dasharray="2 1.200"/><circle cx="8" cy="11" r="1.800" fill="#1a3c90"/><circle cx="5" cy="5" r="1" fill="#fff2c0"/><circle cx="13.500" cy="4.500" r="1" fill="#107028"/></svg>
<div class="a tab" style="left:373px">Export</div>
<div class="a" style="left:413px;top:311px;width:1px;height:15px;background:#aca899"></div>
<svg class="a" style="left:418px;top:309px" width="17" height="17" viewBox="0 0 17 17"><ellipse cx="8" cy="9.500" rx="7" ry="6.300" fill="#3a3aa8"/><ellipse cx="8" cy="8" rx="7" ry="6" fill="#8a90ec" stroke="#2a2a90" stroke-width=".8"/><path d="M8 8V2A7 6 0 0 0 1 8z" fill="#3a8af0" stroke="#2a2a90" stroke-width=".6"/><ellipse cx="10" cy="9" rx="3" ry="2" fill="#a8aef4" opacity=".6"/></svg>
<div class="a tab" style="left:437px">Summary</div>

<!-- data panel -->
<div class="a phead" style="left:213px;top:335px;width:418px;height:17px"></div>
<div class="a" style="left:216px;top:339px;white-space:pre">Data</div>
<svg class="a" style="left:603px;top:338px" width="8" height="9" viewBox="0 0 8 9"><path d="M1.500 .5h4v4h-4zM4.500 .5v4M0 5h7.500M3.500 5v4" stroke="#000" fill="none"/></svg>
<svg class="a" style="left:618px;top:339px" width="9" height="8" viewBox="0 0 9 8"><path d="M1 .5l7 7M8 .5l-7 7" stroke="#000" stroke-width="1.600"/></svg>
<div class="a" style="left:213px;top:352px;width:418px;height:89px;background:#ece9d8;border-left:2px solid #8a8775;border-top:2px solid #8a8775"></div>
<div class="a" style="left:259px;top:371px;width:223px;height:70px;background:#fff"></div>
<div class="a" style="left:487px;top:371px;width:88px;height:70px;background:#fff"></div>
<div class="a" style="left:215px;top:369px;width:397px;height:1px;background:#000"></div>
<div class="a" style="left:495px;top:371px;width:8px;height:15px;background:#c8c8c8"></div>
<div class="a" style="left:268px;top:371px;width:1px;height:15px;background:#888"></div>
<div class="a hex" style="left:272px;top:356px">0  1  2  3  4  5  6  7  8</div>
<div class="a hex" style="left:495px;top:356px">012345678</div>
<div class="a hex" style="left:241px;top:372px">0:</div>
<div class="a hex" style="left:268px;top:372px">C3 AA AB AC AD AE AF A0 A1</div>
<div class="a hex" style="left:495px;top:372px">.........</div>
<div class="a hex" style="left:241px;top:388px">9:</div>
<div class="a hex" style="left:268px;top:388px">33 FC</div>
<div class="a hex" style="left:495px;top:388px">3.</div>
<div class="a sb" style="left:613px;top:354px;width:18px;height:87px;background:#f7f6f1"></div>
<div class="a sbtn dis" style="left:613px;top:354px"><svg width="14" height="14" viewBox="0 0 14 14"><path d="M3 8.500l4-4l4 4" stroke="#c9c7ba" stroke-width="2" fill="none"/></svg></div>
<div class="a sbtn dis" style="left:613px;top:425px"><svg width="14" height="14" viewBox="0 0 14 14"><path d="M3 5l4 4l4-4" stroke="#c9c7ba" stroke-width="2" fill="none"/></svg></div>

<div class="a" style="left:213px;top:441px;width:418px;height:1px;background:#fff"></div>
<!-- status bar -->
<div class="a" style="left:6px;top:449px;white-space:pre">Ready</div>
<div class="a sp" style="left:290px;width:153px">21 elements displayed</div>
<div class="a sp" style="left:445px;width:29px;color:#aca899">CAP</div>
<div class="a sp" style="left:476px;width:28px">NUM</div>
<div class="a sp" style="left:505px;width:34px;color:#aca899">SCRL</div>
<div class="a sp" style="left:541px;width:72px">3.1.3400.0</div>
<svg class="a" style="left:618px;top:449px" width="13" height="13" viewBox="0 0 13 13"><path d="M12 1L1 12M12 5L5 12M12 9L9 12" stroke="#aca899" stroke-width="1.500"/><path d="M13 1L2 12M13 5L6 12M13 9L10 12" stroke="#fff" stroke-width="1"/></svg>
</div></body></html>
